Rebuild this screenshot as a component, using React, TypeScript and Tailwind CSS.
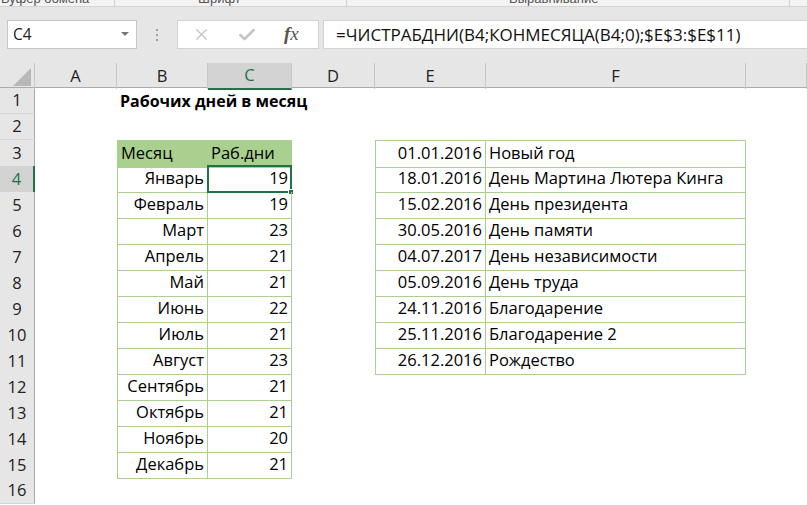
import { Check, X } from "lucide-react";

const cols = ["A", "B", "C", "D", "E", "F", ""];
const grid = "grid grid-cols-[35px_82px_91px_84px_83px_111px_260px_1fr]";

const months: [string, number][] = [
  ["Январь", 19],
  ["Февраль", 19],
  ["Март", 23],
  ["Апрель", 21],
  ["Май", 21],
  ["Июнь", 22],
  ["Июль", 21],
  ["Август", 23],
  ["Сентябрь", 21],
  ["Октябрь", 21],
  ["Ноябрь", 20],
  ["Декабрь", 21],
];

const holidays: [string, string][] = [
  ["01.01.2016", "Новый год"],
  ["18.01.2016", "День Мартина Лютера Кинга"],
  ["15.02.2016", "День президента"],
  ["30.05.2016", "День памяти"],
  ["04.07.2017", "День независимости"],
  ["05.09.2016", "День труда"],
  ["24.11.2016", "Благодарение"],
  ["25.11.2016", "Благодарение 2"],
  ["26.12.2016", "Рождество"],
];

const cell = "flex items-end pb-[1px] px-[3px] whitespace-nowrap";
const bd = "border-r border-b border-[#a9d08e]";

function RowHead({ n }: { n: number }) {
  const active = n === 4;
  return (
    <div
      className={
        "flex items-center justify-center border-b border-[#d4d4d4] text-[16.5px] " +
        (active
          ? "bg-[#d3d3d3] text-[#217346] border-r-2 border-r-[#217346]"
          : "bg-[#e6e6e6] text-[#222] border-r border-r-[#ababab]")
      }
    >
      {n}
    </div>
  );
}

function Row({ n }: { n: number }) {
  const m = n >= 4 && n <= 15 ? months[n - 4] : null;
  const h = n >= 3 && n <= 11 ? holidays[n - 3] : null;
  const top = n === 3 ? " border-t" : "";
  return (
    <div className={grid + " h-[26px]"}>
      <RowHead n={n} />
      <div />
      {n === 1 ? (
        <div className={cell + " font-bold text-[16px]"}>Рабочих дней в месяц</div>
      ) : n === 3 ? (
        <div className={cell + " " + bd + top + " border-l bg-[#a9d08e]"}>Месяц</div>
      ) : m ? (
        <div className={cell + " " + bd + " border-l justify-end"}>{m[0]}</div>
      ) : (
        <div />
      )}
      {n === 3 ? (
        <div className={cell + " " + bd + top + " bg-[#a9d08e]"}>Раб.дни</div>
      ) : m ? (
        <div className={cell + " " + bd + " justify-end relative"}>
          {m[1]}
          {n === 4 && (
            <div className="absolute -left-[1px] -top-[1px] -right-[1px] -bottom-[1px] border-2 border-[#217346]">
              <div className="absolute -right-[4px] -bottom-[4px] h-[6px] w-[6px] bg-[#217346] border border-white" />
            </div>
          )}
        </div>
      ) : (
        <div />
      )}
      <div />
      {h ? (
        <>
          <div className={cell + " " + bd + top + " border-l justify-end"}>{h[0]}</div>
          <div className={cell + " " + bd + top}>{h[1]}</div>
        </>
      ) : (
        <>
          <div />
          <div />
        </>
      )}
      <div />
    </div>
  );
}

export default function App() {
  return (
    <div className="w-[807px] h-[505px] overflow-hidden bg-white font-['Open_Sans',sans-serif] text-[16.5px] text-black">
      <div className="flex h-[7px] overflow-hidden bg-[#f3f3f3] border-b border-[#d5d5d5] text-[13px] text-[#555] font-['Liberation_Sans',sans-serif]">
        <div className="w-[115px] border-r border-[#d0d0d0]">
          <div className="-mt-[11px] pl-[1px]">Буфер обмена</div>
        </div>
        <div className="w-[232px] border-r border-[#d0d0d0]">
          <div className="-mt-[11px] pl-[83px]">Шрифт</div>
        </div>
        <div className="w-[443px] border-r border-[#d0d0d0]">
          <div className="-mt-[11px] pl-[162px]">Выравнивание</div>
        </div>
      </div>

      <div className="h-[56px] bg-[#e6e6e6] flex items-start pt-[13px] pl-[7px] font-['Open_Sans',sans-serif]">
        <div className="w-[130px] h-[29px] bg-white border border-[#c6c6c6] flex items-center pl-[5px] pr-[7px] text-[15.5px] text-[#222]">
          <span className="flex-1">C4</span>
          <svg width="8" height="5" viewBox="0 0 8 5">
            <path d="M0 0h8L4 4z" fill="#777" />
          </svg>
        </div>
        <div className="w-[40px] h-[29px] flex flex-col items-center justify-center gap-[3px]">
          <span className="w-[2px] h-[2px] bg-[#a0a0a0]" />
          <span className="w-[2px] h-[2px] bg-[#a0a0a0]" />
          <span className="w-[2px] h-[2px] bg-[#a0a0a0]" />
        </div>
        <div className="w-[142px] h-[29px] bg-white border border-[#d4d4d4] flex items-center">
          <X className="ml-[14px] w-[19px] h-[19px] text-[#c4c4c4]" strokeWidth={1.5} />
          <Check className="ml-[26px] w-[20px] h-[20px] text-[#c4c4c4]" strokeWidth={3} />
          <span className="ml-[27px] font-['Liberation_Serif',serif] italic text-[19px] text-[#555]">
            <span className="font-semibold">f</span>x
          </span>
        </div>
        <div className="ml-[4px] flex-1 h-[29px] bg-white border border-[#d4d4d4] border-r-0 flex items-center pl-[12px] text-[17px] text-[#111]">
          =ЧИСТРАБДНИ(B4;КОНМЕСЯЦА(B4;0);$E$3:$E$11)
        </div>
      </div>

      <div className={grid + " h-[25px] bg-[#e6e6e6] border-b border-[#ababab] text-[16.5px] text-[#222]"}>
        <div className="relative border-r border-[#c6c6c6]">
          <svg className="absolute right-[3px] bottom-[3px]" width="18" height="18" viewBox="0 0 18 18">
            <path d="M18 0V18H0z" fill="#b8b8b8" />
          </svg>
        </div>
        {cols.map((c, i) => (
          <div
            key={i}
            className={
              "flex items-center justify-center border-r border-[#c6c6c6] " +
              (c === "C" ? "bg-[#d3d3d3] text-[#217346] border-b-2 border-b-[#217346] -mb-[1px]" : "")
            }
          >
            {c}
          </div>
        ))}
      </div>

      {Array.from({ length: 16 }, (_, i) => (
        <Row key={i} n={i + 1} />
      ))}
    </div>
  );
}
